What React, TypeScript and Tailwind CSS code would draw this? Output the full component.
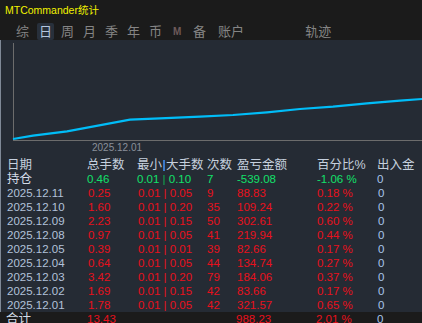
import React from 'react';

type Row = {
  date: string;
  lots: string;
  min: string;
  max: string;
  count: string;
  pnl: string;
  pct: string;
  flow: string;
};

const rows: Row[] = [
  { date: '2025.12.11', lots: '0.25', min: '0.01', max: '0.05', count: '9', pnl: '88.83', pct: '0.18 %', flow: '0' },
  { date: '2025.12.10', lots: '1.60', min: '0.01', max: '0.20', count: '35', pnl: '109.24', pct: '0.22 %', flow: '0' },
  { date: '2025.12.09', lots: '2.23', min: '0.01', max: '0.15', count: '50', pnl: '302.61', pct: '0.60 %', flow: '0' },
  { date: '2025.12.08', lots: '0.97', min: '0.01', max: '0.05', count: '41', pnl: '219.94', pct: '0.44 %', flow: '0' },
  { date: '2025.12.05', lots: '0.39', min: '0.01', max: '0.01', count: '39', pnl: '82.66', pct: '0.17 %', flow: '0' },
  { date: '2025.12.04', lots: '0.64', min: '0.01', max: '0.05', count: '44', pnl: '134.74', pct: '0.27 %', flow: '0' },
  { date: '2025.12.03', lots: '3.42', min: '0.01', max: '0.20', count: '79', pnl: '184.06', pct: '0.37 %', flow: '0' },
  { date: '2025.12.02', lots: '1.69', min: '0.01', max: '0.15', count: '42', pnl: '83.66', pct: '0.17 %', flow: '0' },
  { date: '2025.12.01', lots: '1.78', min: '0.01', max: '0.05', count: '42', pnl: '321.57', pct: '0.65 %', flow: '0' },
];

const grid = 'grid grid-cols-[80px_50px_70px_30px_80px_60px_1fr] pl-[6px] h-[14px] leading-[14px] whitespace-nowrap';

// equity curve, sampled from the picture
const curve = '13,139 33,135.7 67,131.3 130,119.7 160,118.3 200,116.7 233,115 267,112.3 300,109 333,106.7 367,103.3 400,100.7 422,99';

export default function App() {
  return (
    <div className="w-[422px] h-[323px] overflow-hidden bg-[#252b34] font-['Liberation_Sans','Noto_Sans_CJK_SC',sans-serif]">
      {/* title + tabs */}
      <div className="h-[40px] bg-[#1b1b1b]">
        <div className="pl-[5px] pt-[3px] text-[10.5px] leading-[14px] text-[#f2f200]">
          MTCommander统计
        </div>
        <div className="flex items-center mt-[6px] h-[17px] text-[13px] leading-[17px] text-[#858585]">
          <span className="ml-[16px]">综</span>
          <span className="ml-[8px] w-[17px] text-center rounded-[2px] bg-[#28303b] text-[#b4c6de]">日</span>
          <span className="ml-[7px]">周</span>
          <span className="ml-[9px]">月</span>
          <span className="ml-[9px]">季</span>
          <span className="ml-[9px]">年</span>
          <span className="ml-[9px]">币</span>
          <span className="ml-[11px] w-[9px] text-[10px] font-bold text-[#6e5a5a]">M</span>
          <span className="ml-[11px]">备</span>
          <span className="ml-[12px]">账户</span>
          <span className="ml-[61px]">轨迹</span>
        </div>
      </div>

      <div className="border-l border-[#7f8997]">
        {/* chart */}
        <div className="relative h-[118px]">
          <svg width="421" height="118" viewBox="1 40 421 118" className="block">
            <line x1="13.5" y1="43" x2="13.5" y2="140.5" stroke="#6c6c6c" strokeWidth="1" />
            <line x1="13" y1="140.5" x2="422" y2="140.5" stroke="#6c6c6c" strokeWidth="1" />
            <polyline points={curve} fill="none" stroke="#00bdf8" strokeWidth="2.2" />
          </svg>
          <span className="absolute left-[91px] top-[102px] text-[10px] leading-[12px] text-[#8a909a]">
            2025.12.01
          </span>
        </div>

        {/* table */}
        <div className="text-[11.5px]">
          <div className={`${grid} text-[12.5px] text-[#c6d0de]`}>
            <span>日期</span>
            <span>总手数</span>
            <span className="flex items-center">
              最小<span className="inline-block w-[2px] h-[11px] mx-[1px] bg-[#3b78c8]" />大手数
            </span>
            <span>次数</span>
            <span>盈亏金额</span>
            <span>百分比%</span>
            <span>出入金</span>
          </div>
          <div className={`${grid} text-[#12e06a]`}>
            <span className="text-[12.5px] text-[#d4dce8]">持仓</span>
            <span>0.46</span>
            <span>0.01 <span className="text-[#0fa850]">|</span> 0.10</span>
            <span>7</span>
            <span>-539.08</span>
            <span>-1.06 %</span>
            <span className="text-[#a9c6ec]">0</span>
          </div>
          {rows.map(r => (
            <div key={r.date} className={`${grid} text-[#e8101c]`}>
              <span className="text-[#b2c2da]">{r.date}</span>
              <span className="pl-[1px]">{r.lots}</span>
              <span className="pl-[1px]">{r.min} | {r.max}</span>
              <span>{r.count}</span>
              <span>{r.pnl}</span>
              <span>{r.pct}</span>
              <span className="pl-[1px] text-[#a9c6ec]">{r.flow}</span>
            </div>
          ))}
        </div>
      </div>

      <div className={`${grid} bg-[#1b1b1b] text-[11.5px] text-[#e8101c]`}>
        <span className="text-[12.5px] text-[#d4dce8]">合计</span>
        <span className="pl-[1px]">13.43</span>
        <span></span>
        <span></span>
        <span>988.23</span>
        <span>2.01 %</span>
        <span className="pl-[1px] text-[#a9c6ec]">0</span>
      </div>
    </div>
  );
}
